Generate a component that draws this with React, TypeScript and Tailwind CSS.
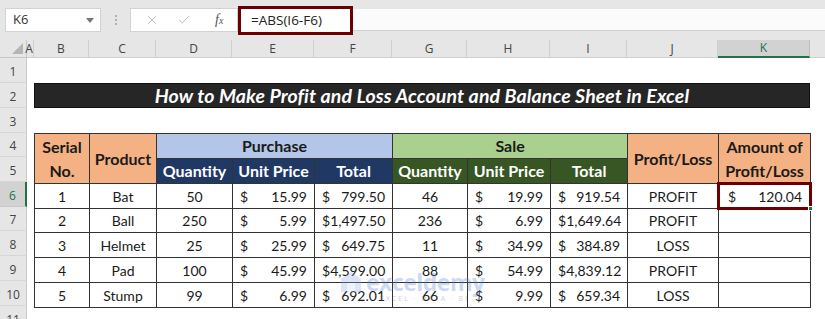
import { Check, X } from "lucide-react";

const colWidths = [
  { id: "A", w: 7 },
  { id: "B", w: 55 },
  { id: "C", w: 67 },
  { id: "D", w: 76 },
  { id: "E", w: 82 },
  { id: "F", w: 78 },
  { id: "G", w: 75 },
  { id: "H", w: 83 },
  { id: "I", w: 77 },
  { id: "J", w: 91 },
  { id: "K", w: 92 },
];

const rowHeights = [25, 25, 25, 24, 25, 25, 24, 25, 25, 25, 25];

const rows = [
  { sn: 1, product: "Bat", pq: 50, pu: "15.99", pt: "799.50", sq: 46, su: "19.99", st: "919.54", pl: "PROFIT", amt: "120.04" },
  { sn: 2, product: "Ball", pq: 250, pu: "5.99", pt: "1,497.50", sq: 236, su: "6.99", st: "1,649.64", pl: "PROFIT", amt: "" },
  { sn: 3, product: "Helmet", pq: 25, pu: "25.99", pt: "649.75", sq: 11, su: "34.99", st: "384.89", pl: "LOSS", amt: "" },
  { sn: 4, product: "Pad", pq: 100, pu: "45.99", pt: "4,599.00", sq: 88, su: "54.99", st: "4,839.12", pl: "PROFIT", amt: "" },
  { sn: 5, product: "Stump", pq: 99, pu: "6.99", pt: "692.01", sq: 66, su: "9.99", st: "659.34", pl: "LOSS", amt: "" },
];

const Money = ({ v }: { v: string }) => (
  <div className="flex justify-between px-[7px]">
    <span>$</span>
    <span>{v}</span>
  </div>
);

const cell = "border border-[#333] p-0";

const App = () => {
  return (
    <div className="relative w-[825px] h-[319px] overflow-hidden bg-white font-['Lato',sans-serif] text-[#1a1a1a]">
      {/* formula bar */}
      <div className="h-[40px] bg-[#e6e6e6] flex items-center pl-[5px] font-['Open_Sans',sans-serif]">
        <div className="w-[96px] h-[24px] bg-white border border-[#d2d2d2] flex items-center justify-between pl-[7px] pr-[6px] text-[13px] text-[#333]">
          <span>K6</span>
          <svg width="8" height="5" viewBox="0 0 8 5">
            <path d="M0 0 L8 0 L4 5 Z" fill="#777" />
          </svg>
        </div>
        <div className="w-[29px] flex flex-col items-center gap-[2px]">
          <div className="w-[2px] h-[2px] bg-[#b0b0b0]" />
          <div className="w-[2px] h-[2px] bg-[#b0b0b0]" />
          <div className="w-[2px] h-[2px] bg-[#b0b0b0]" />
        </div>
        <div className="w-[108px] h-[24px] bg-white border border-[#d2d2d2] flex items-center pl-[14px] gap-[18px] text-[#a8a8a8]">
          <X size={14} strokeWidth={1.4} />
          <Check size={14} strokeWidth={1.4} />
          <span className="ml-[6px] font-['Liberation_Serif',serif] italic text-[14px] text-[#555] leading-none">
            f<span className="text-[10px]">x</span>
          </span>
        </div>
        <div className="w-[115px] h-[29px] border-[3px] border-[#6c0000] bg-white flex items-center pl-[10px] text-[13.5px] text-[#222]">
          =ABS(I6-F6)
        </div>
        <div className="flex-1 h-[22px] bg-[#fbfbfb] border-b border-[#d0d0d0]" />
      </div>

      {/* column headers */}
      <div className="h-[18px] flex bg-[#e6e6e6] font-['Open_Sans',sans-serif] text-[12px] text-[#444]">
        <div className="w-[27px] shrink-0 border-r border-b border-[#c8c8c8] flex items-end justify-end p-[3px]">
          <svg width="11" height="11" viewBox="0 0 11 11">
            <path d="M11 0 L11 11 L0 11 Z" fill="#b5b5b5" />
          </svg>
        </div>
        {colWidths.map((c) => (
          <div
            key={c.id}
            style={{ width: c.w }}
            className={
              c.id === "K"
                ? "shrink-0 flex items-center justify-center bg-[#d2d2d2] border-r border-[#bcbcbc] border-b-2 border-b-[#217346] text-[#217346]"
                : "shrink-0 flex items-center justify-center border-r border-b border-[#cfcfcf]"
            }
          >
            {c.id === "A" ? <span className="-ml-[2px]">A</span> : c.id}
          </div>
        ))}
        <div className="flex-1 border-b border-[#cfcfcf]" />
      </div>

      <div className="flex">
        {/* row headers */}
        <div className="w-[27px] shrink-0 flex flex-col font-['Open_Sans',sans-serif] text-[12px] text-[#444]">
          {rowHeights.map((h, i) => (
            <div
              key={i}
              style={{ height: h }}
              className={
                i === 5
                  ? "flex items-end justify-center pb-[1px] bg-[#d2d2d2] border-b border-[#c8c8c8] border-r-2 border-r-[#217346] text-[#217346]"
                  : "flex items-end justify-center pb-[1px] bg-[#e6e6e6] border-b border-[#d6d6d6] border-r border-r-[#c8c8c8]"
              }
            >
              {i + 1}
            </div>
          ))}
        </div>

        {/* sheet */}
        <div className="pl-[7px]">
          <div className="h-[25px]" />
          <div className="w-[776px] h-[25px] bg-[#262626] border border-[#111] flex items-center justify-center text-white font-bold italic text-[19.5px] tracking-[0.1px]">
            How to Make Profit and Loss Account and Balance Sheet in Excel
          </div>
          <div className="h-[25px]" />
          <table className="table-fixed border-collapse w-[776px] text-[14px]">
            <colgroup>
              {colWidths.slice(1).map((c) => (
                <col key={c.id} style={{ width: c.w }} />
              ))}
            </colgroup>
            <thead className="font-bold text-[16px] leading-[24px]">
              <tr className="h-[24px]">
                <th rowSpan={2} className={`${cell} bg-[#f4b183]`}>
                  Serial
                  <br />
                  No.
                </th>
                <th rowSpan={2} className={`${cell} bg-[#f4b183]`}>
                  Product
                </th>
                <th colSpan={3} className={`${cell} bg-[#b4c6e7]`}>
                  Purchase
                </th>
                <th colSpan={3} className={`${cell} bg-[#a9d08e]`}>
                  Sale
                </th>
                <th rowSpan={2} className={`${cell} bg-[#f4b183]`}>
                  Profit/Loss
                </th>
                <th rowSpan={2} className={`${cell} bg-[#f4b183]`}>
                  Amount of
                  <br />
                  Profit/Loss
                </th>
              </tr>
              <tr className="h-[25px] text-white">
                <th className={`${cell} bg-[#203864]`}>Quantity</th>
                <th className={`${cell} bg-[#203864]`}>Unit Price</th>
                <th className={`${cell} bg-[#203864]`}>Total</th>
                <th className={`${cell} bg-[#375623]`}>Quantity</th>
                <th className={`${cell} bg-[#375623]`}>Unit Price</th>
                <th className={`${cell} bg-[#375623]`}>Total</th>
              </tr>
            </thead>
            <tbody>
              {rows.map((r, i) => (
                <tr key={r.sn} style={{ height: i === 1 ? 24 : 25 }}>
                  <td className={`${cell} text-center`}>{r.sn}</td>
                  <td className={`${cell} text-center`}>{r.product}</td>
                  <td className={`${cell} text-center`}>{r.pq}</td>
                  <td className={cell}>
                    <Money v={r.pu} />
                  </td>
                  <td className={cell}>
                    <Money v={r.pt} />
                  </td>
                  <td className={`${cell} text-center`}>{r.sq}</td>
                  <td className={cell}>
                    <Money v={r.su} />
                  </td>
                  <td className={cell}>
                    <Money v={r.st} />
                  </td>
                  <td className={`${cell} text-center`}>{r.pl}</td>
                  <td className={`${cell} relative`}>
                    {r.amt && (
                      <>
                        <div className="flex justify-between pl-[9px] pr-[8px]">
                          <span>$</span>
                          <span>{r.amt}</span>
                        </div>
                        <div className="absolute -inset-[2px] border-[3px] border-[#6c0000]" />
                        <div className="absolute -right-[3px] -bottom-[3px] w-[5px] h-[5px] bg-[#217346] border border-white" />
                      </>
                    )}
                  </td>
                </tr>
              ))}
            </tbody>
          </table>
        </div>
      </div>

      {/* watermark */}
      <div className="absolute left-[340px] top-[271px] flex items-start gap-[4px] opacity-30 pointer-events-none">
        <svg width="22" height="22" viewBox="0 0 22 22">
          <path d="M11 1 L21 8 L21 21 L1 21 L1 8 Z" fill="#8fa9e0" />
          <path d="M7 12 L15 12 L15 21 L7 21 Z" fill="#c9d6f2" />
        </svg>
        <div className="flex flex-col leading-none">
          <span className="font-['Open_Sans',sans-serif] font-bold text-[23px] text-[#5b7fd6] tracking-[-0.5px]">
            exceldemy
          </span>
          <span className="font-['Open_Sans',sans-serif] text-[7px] tracking-[2px] text-[#666] mt-[1px] ml-[14px]">
            EXCEL · DATA · BI
          </span>
        </div>
      </div>
    </div>
  );
};

export default App;
